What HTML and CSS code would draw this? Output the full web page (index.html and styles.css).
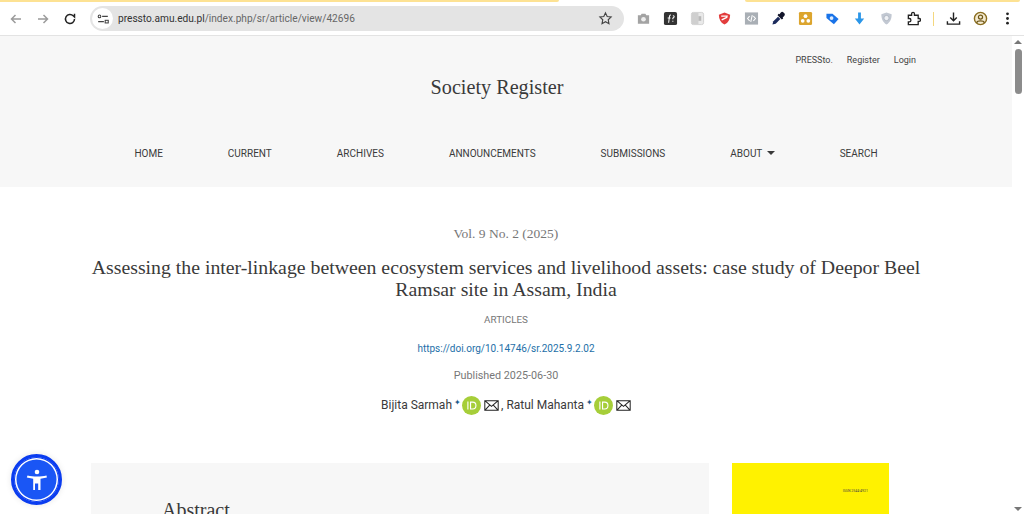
FILE: index.html
```html
<!DOCTYPE html>
<html lang="en">
<head>
  <meta charset="UTF-8">
  <title>Assessing the inter-linkage between ecosystem services and livelihood assets</title>
  <link rel="stylesheet" href="styles.css">
</head>
<body>
  <div class="browser-bar">
    <div class="top-strip">
      <span class="strip-left"></span>
      <span class="strip-right"></span>
    </div>
    <div class="toolbar">
      <div class="nav-buttons">
        <svg class="ico" viewBox="0 0 16 16"><path d="M13 8H3.500M7.500 4 3.500 8l4 4" class="line dim"/></svg>
        <svg class="ico" viewBox="0 0 16 16"><path d="M3 8h9.500M8.500 4l4 4-4 4" class="line dim"/></svg>
        <svg class="ico" viewBox="0 0 16 16"><path d="M12.500 8a4.500 4.500 0 1 1-1.300-3.200L12.500 6V2.800" class="line dark"/></svg>
      </div>
      <div class="address">
        <span class="site-info">
          <svg viewBox="0 0 16 16" width="14" height="14"><circle cx="4" cy="5" r="1.500" class="thin"/><path d="M7 5h6.500M2.500 11H9" class="thin"/><rect x="10.500" y="9.500" width="3.500" height="3" class="thin"/></svg>
        </span>
        <span class="url"><b>pressto.amu.edu.pl</b>/index.php/sr/article/view/42696</span>
        <svg class="star" viewBox="0 0 16 16" width="15" height="15"><path d="m8 2 1.800 3.900 4.200.5-3.100 2.900.8 4.200L8 11.400l-3.700 2.100.8-4.200L2 6.400l4.200-.5z" class="thin"/></svg>
      </div>
      <div class="extensions">
        <svg class="ext" viewBox="0 0 16 16"><path d="M2 4.500h3l1-1.500h4l1 1.500h3v9H2z" fill="#a3a3a3"/><circle cx="8" cy="8.800" r="2.500" fill="#eee"/></svg>
        <svg class="ext" viewBox="0 0 16 16"><rect x="1" y="1" width="14" height="14" rx="2" fill="#333"/><path d="M8.500 4.200C7.200 4 7 5 6.800 6.500L6 12.500M5 7.500h3M10.500 5.200c1.500-.5 2 1.200.6 2l-.6.6v1M10.500 10.500v1" stroke="#fff" stroke-width="1.100" fill="none"/></svg>
        <svg class="ext" viewBox="0 0 16 16"><rect x="1.500" y="1.500" width="13" height="13" rx="2" fill="#e9e9e9" stroke="#d0d0d0"/><path d="M2 2h7v12H2z" fill="#cfcfcf"/><path d="M9 5.500h3v5H9z" fill="#b9b9b9"/></svg>
        <svg class="ext" viewBox="0 0 16 16"><path d="M8 1.500 14 4c0 5-2 8.500-6 10.500C4 12.500 2 9 2 4z" fill="#e23c3c"/><path d="M4.500 5.500h7M5 9.500l6-3" stroke="#fff" stroke-width="1.400"/></svg>
        <svg class="ext" viewBox="0 0 16 16"><rect x="1" y="1.500" width="14" height="13" fill="#a9afb5"/><path d="M6 5.500 3.800 8 6 10.500M10 5.500 12.200 8 10 10.500M8.800 4.500l-1.600 7" stroke="#fff" stroke-width="1.100" fill="none"/></svg>
        <svg class="ext" viewBox="0 0 16 16"><path d="M10.500 1.500a2 2 0 0 1 2.800 0l1 1a2 2 0 0 1 0 2.500L12.500 7l.5 1-1.500 1L7 4.500 8 3l1 .5z" fill="#12152a"/><path d="M7.500 6 2.500 11 1.500 14.500 5 13.500l5-5" fill="#1b2a5c"/></svg>
        <svg class="ext" viewBox="0 0 16 16"><rect x="1" y="1" width="14" height="14" rx="1.500" fill="#dca52e"/><circle cx="8" cy="5.500" r="2" fill="#fff"/><circle cx="5" cy="10.500" r="2" fill="#fff"/><circle cx="11" cy="10.500" r="2" fill="#fff"/></svg>
        <svg class="ext" viewBox="0 0 16 16"><path d="M1.500 3h6.500l6.500 5.500-5 5.500-8-6.500z" fill="#1a73e8"/><circle cx="7" cy="7.500" r="2" fill="#dcebff"/></svg>
        <svg class="ext" viewBox="0 0 16 16"><path d="M6.500 1.500h3V8H13l-5 6.500L3 8h3.500z" fill="#2b96e8"/></svg>
        <svg class="ext" viewBox="0 0 16 16"><path d="M8 1.500 13.500 3.500c0 5-1.500 8.500-5.500 11-4-2.500-5.500-6-5.500-11z" fill="#c2c8d2"/><circle cx="8" cy="7.500" r="2.800" fill="#eef0f4" stroke="#aeb5c0"/></svg>
        <svg class="ext" viewBox="0 0 16 16"><path d="M2.500 4.500H6V3a1.500 1.500 0 0 1 3 0v1.500h4v3.500h1a1.500 1.500 0 0 1 0 3h-1v3.500H2.500v-3h1a1.700 1.700 0 0 0 0-3.500h-1z" fill="none" stroke="#222" stroke-width="1.400"/></svg>
        <span class="divider"></span>
        <svg class="ext" viewBox="0 0 16 16"><path d="M8 1.500v8.500M4.500 7 8 10.500 11.500 7M1.500 11v3h13v-3" class="line dark"/></svg>
        <svg class="ext" viewBox="0 0 16 16"><circle cx="8" cy="8" r="6.500" fill="#f4ead0" stroke="#8a6d1f" stroke-width="1.500"/><circle cx="8" cy="6.500" r="2.200" fill="none" stroke="#6e5718" stroke-width="1.300"/><path d="M3.800 12.500c1-2.500 7.400-2.500 8.400 0" fill="none" stroke="#6e5718" stroke-width="1.300"/></svg>
        <svg class="ext" viewBox="0 0 16 16"><circle cx="8" cy="3" r="1.500" fill="#222"/><circle cx="8" cy="8" r="1.500" fill="#222"/><circle cx="8" cy="13" r="1.500" fill="#222"/></svg>
      </div>
    </div>
  </div>

  <div class="viewport">
    <div class="page">
      <header class="site-header">
        <div class="user-nav">
          <a>PRESSto.</a>
          <a>Register</a>
          <a>Login</a>
        </div>
        <div class="site-name">Society Register</div>
        <nav class="main-nav">
          <a>Home</a>
          <a>Current</a>
          <a>Archives</a>
          <a>Announcements</a>
          <a>Submissions</a>
          <a>About <i class="caret"></i></a>
          <a>Search</a>
        </nav>
      </header>

      <section class="article-head">
        <div class="issue">Vol. 9 No. 2 (2025)</div>
        <h1>Assessing the inter-linkage between ecosystem services and livelihood assets: case study of Deepor Beel Ramsar site in Assam, India</h1>
        <div class="section-name">Articles</div>
        <a class="doi">https://doi.org/10.14746/sr.2025.9.2.02</a>
        <div class="published">Published 2025-06-30</div>
        <div class="authors">
          <span>Bijita Sarmah</span><sup>✦</sup>
          <svg class="orcid" viewBox="0 0 20 20"><circle cx="10" cy="10" r="10" fill="#a6ce39"/><path d="M6.200 5.800v8.400M9 6.500v7.200h2.300c4.500 0 4.500-7.200 0-7.200z" fill="none" stroke="#fff" stroke-width="1.200"/></svg>
          <svg class="mail" viewBox="0 0 16 12"><path d="M.7.700h14.600v10.600H.7zM.7.700 8 7l7.300-6.300M.7 11.300 6 5.500M15.300 11.300 10 5.500" fill="none" stroke="#222" stroke-width="1.100"/></svg>
          <span class="comma">,</span>
          <span>Ratul Mahanta</span><sup>✦</sup>
          <svg class="orcid" viewBox="0 0 20 20"><circle cx="10" cy="10" r="10" fill="#a6ce39"/><path d="M6.200 5.800v8.400M9 6.500v7.200h2.300c4.500 0 4.500-7.200 0-7.200z" fill="none" stroke="#fff" stroke-width="1.200"/></svg>
          <svg class="mail" viewBox="0 0 16 12"><path d="M.7.700h14.600v10.600H.7zM.7.700 8 7l7.300-6.300M.7 11.300 6 5.500M15.300 11.300 10 5.500" fill="none" stroke="#222" stroke-width="1.100"/></svg>
        </div>
      </section>

      <section class="article-body">
        <div class="abstract-card">
          <h2>Abstract</h2>
        </div>
        <aside class="cover">
          <span class="cover-text">ISSN 2544-4921</span>
        </aside>
      </section>
    </div>

    <div class="scrollbar">
      <i class="arrow up"></i>
      <div class="thumb"></div>
      <i class="arrow down"></i>
    </div>

    <button class="a11y-btn">
      <svg viewBox="0 0 24 24" width="24" height="24"><circle cx="12" cy="4" r="2.300" fill="#fff"/><path d="M2.500 7.500c3 .8 6 1 9.500 1s6.500-.2 9.500-1l.4 2-6.400 1.200V22h-2.300v-6.500h-3.200V22H8.200V10.700L1.800 9.500z" fill="#fff"/></svg>
    </button>
  </div>
</body>
</html>
```

FILE: styles.css
```css
* { box-sizing: border-box; }

html, body {
  margin: 0;
  height: 514px;
  overflow: hidden;
}

body {
  font-family: "Roboto", sans-serif;
  background: #fff;
  color: #333;
  display: flex;
  flex-direction: column;
}

/* browser chrome */
.browser-bar {
  height: 36px;
  flex: none;
  background: #fff;
  border-bottom: 1px solid #e3e3e3;
}

.top-strip {
  height: 2px;
  display: flex;
}

.strip-left {
  width: 559px;
  background: #fde293;
  border-radius: 0 0 2px 0;
}

.strip-right {
  width: 275px;
  margin-left: 186px;
  background: #fde293;
  border-radius: 0 0 3px 3px;
}

.toolbar {
  height: 33px;
  display: flex;
  align-items: center;
  padding-left: 8px;
}

.nav-buttons {
  display: flex;
  gap: 11px;
  width: 82px;
}

.ico { width: 16px; height: 16px; }

.line { fill: none; stroke-width: 1.500; }
.line.dim { stroke: #9b9b9b; }
.line.dark { stroke: #222; }
.thin { fill: none; stroke: #444; stroke-width: 1.200; }

.address {
  width: 534px;
  height: 25px;
  border-radius: 13px;
  background: #e4e4e4;
  display: flex;
  align-items: center;
  padding: 0 11px 0 2px;
}

.site-info {
  width: 21px;
  height: 21px;
  border-radius: 50%;
  background: #fff;
  display: flex;
  align-items: center;
  justify-content: center;
  margin-right: 5px;
}

.url {
  flex: 1;
  font-size: 10.150px;
  color: #666;
}

.url b { font-weight: 400; color: #333; }

.extensions {
  display: flex;
  align-items: center;
  gap: 12px;
  margin-left: 12px;
}

.ext { width: 15px; height: 15px; flex: none; }

.divider {
  width: 1px;
  height: 14px;
  background: #f4d77e;
}

/* page */
.viewport {
  flex: 1;
  min-height: 0;
  display: flex;
  position: relative;
}

.page {
  flex: 1;
  min-width: 0;
  overflow: hidden;
  font-size: 11px;
}

.site-header {
  height: 151px;
  background: #f7f7f7;
  display: flex;
  flex-direction: column;
}

.user-nav {
  display: flex;
  justify-content: flex-end;
  gap: 14px;
  padding: 17px 96px 0 0;
  font-size: 9px;
  line-height: 14px;
  color: #444;
}

.site-name {
  font-family: "Liberation Serif", serif;
  font-size: 20.200px;
  line-height: 26px;
  text-align: center;
  margin-top: 7px;
  padding-right: 18px;
  color: #3a3a3a;
}

.main-nav {
  display: flex;
  justify-content: center;
  gap: 65px;
  margin-top: 47px;
  font-size: 10px;
  line-height: 14px;
  text-transform: uppercase;
  color: #3a3a3a;
}

.caret {
  display: inline-block;
  margin-left: 2px;
  vertical-align: 2px;
  border-top: 4px solid #3a3a3a;
  border-left: 4px solid transparent;
  border-right: 4px solid transparent;
}

.article-head {
  padding: 38px 91px 0 91px;
  text-align: center;
}

.issue {
  font-family: "Liberation Serif", serif;
  font-size: 13.500px;
  line-height: 18px;
  color: #777;
}

.article-head h1 {
  font-family: "Liberation Serif", serif;
  font-weight: 400;
  font-size: 19.800px;
  line-height: 22px;
  margin: 13px 0 0;
  color: #3a3a3a;
}

.section-name {
  margin-top: 13px;
  font-size: 9.900px;
  line-height: 14px;
  text-transform: uppercase;
  color: #777;
}

.doi {
  display: block;
  margin-top: 15px;
  font-size: 10px;
  line-height: 14px;
  color: #1e6fa8;
}

.published {
  margin-top: 13px;
  font-size: 10.800px;
  line-height: 14px;
  color: #777;
}

.authors {
  margin-top: 12px;
  height: 20px;
  display: flex;
  align-items: center;
  justify-content: center;
  font-size: 12px;
  color: #3a3a3a;
}

.authors sup {
  font-size: 8px;
  margin: -6px 1px 0 2px;
  color: #1e5a8c;
}

.orcid { width: 19px; height: 19px; margin-right: 3px; }
.mail { width: 15px; height: 11px; }
.comma { margin: 0 3px 0 2px; }

.article-body {
  display: flex;
  gap: 23px;
  padding: 48px 0 0 91px;
}

.abstract-card {
  width: 618px;
  height: 120px;
  background: #f7f7f7;
  padding: 36px 71px;
}

.abstract-card h2 {
  font-family: "Liberation Serif", serif;
  font-weight: 400;
  font-size: 20px;
  line-height: 22px;
  margin: 0;
  color: #3a3a3a;
}

.cover {
  width: 157px;
  height: 120px;
  background: #fff200;
  padding: 26px 21px 0 0;
  text-align: right;
}

.cover-text {
  font-size: 3.500px;
  color: #444;
  display: block;
}

.scrollbar {
  width: 12px;
  flex: none;
  background: #fff;
  display: flex;
  flex-direction: column;
  align-items: center;
  position: relative;
  padding-top: 4px;
}

.arrow {
  display: block;
  border-left: 4px solid transparent;
  border-right: 4px solid transparent;
}

.arrow.up { border-bottom: 4px solid #777; }
.arrow.down {
  border-top: 4px solid #777;
  margin-top: auto;
  margin-bottom: 3px;
}

.thumb {
  width: 7px;
  height: 45px;
  margin-top: 5px;
  border-radius: 4px;
  background: #8c8c8c;
}

.a11y-btn {
  position: absolute;
  left: 11px;
  top: 418px;
  width: 51px;
  height: 51px;
  padding: 0;
  border-radius: 50%;
  border: 3px solid #0a3cf0;
  outline: none;
  background: #1a56f5;
  box-shadow: inset 0 0 0 1px #0a3cf0, inset 0 0 0 2.500px #fff, 0 0 6px rgba(0, 0, 0, 0.1);
  display: flex;
  align-items: center;
  justify-content: center;
}
```
